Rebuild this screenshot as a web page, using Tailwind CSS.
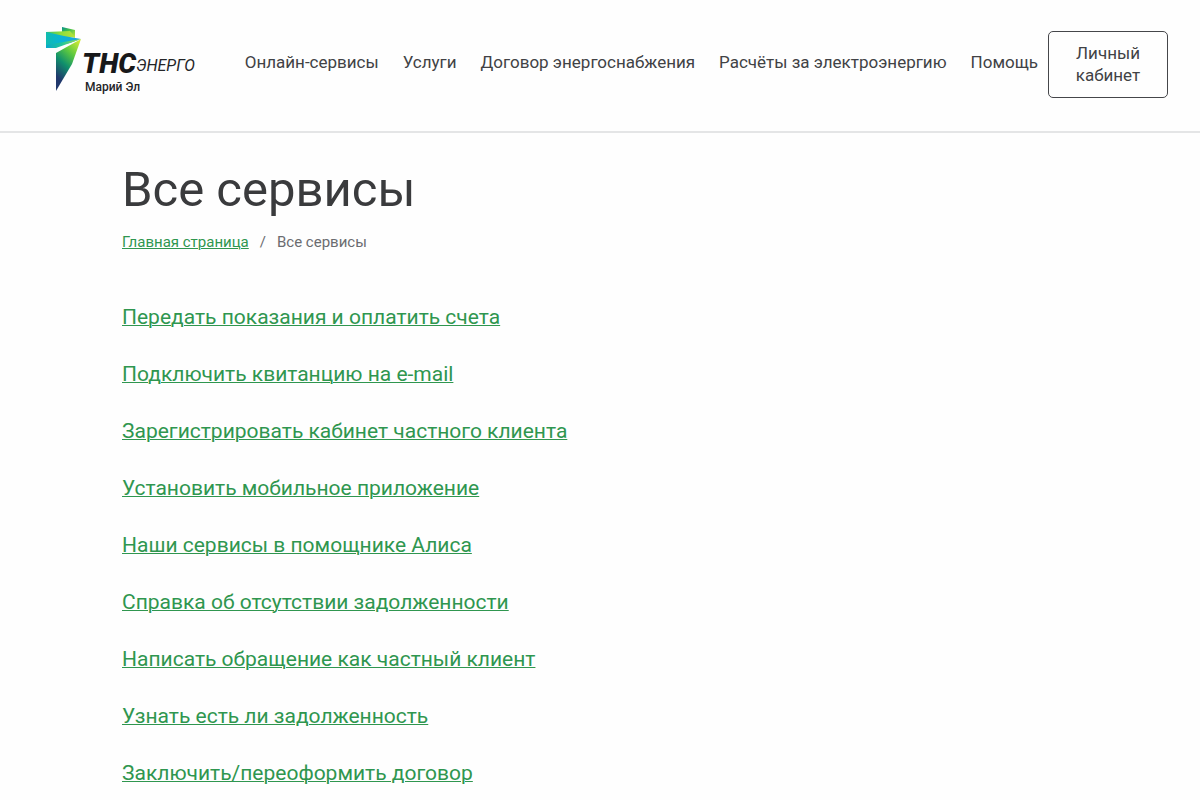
<!DOCTYPE html>
<html lang="ru">
<head>
<meta charset="utf-8">
<meta name="viewport" content="width=device-width, initial-scale=1">
<title>Все сервисы</title>
<script src="https://cdn.jsdelivr.net/npm/@tailwindcss/browser@4"></script>
</head>
<body class="bg-[#fefefe] font-['Roboto',sans-serif] text-[#414245] overflow-x-hidden">
<header class="flex items-start justify-between border-b-2 border-[#e4e5e6] pt-[26px] pb-[33px] pl-[44px] pr-[32px]">
  <a href="#" aria-label="ТНС энерго Марий Эл" class="shrink-0">
    <svg class="block" width="156" height="72" viewBox="0 0 156 72">
      <defs>
        <linearGradient id="back" x1="0" y1="0" x2="1" y2="1"><stop offset="0" stop-color="#0a8f8c"/><stop offset="0.4" stop-color="#3fbf4c"/><stop offset="1" stop-color="#d0e838"/></linearGradient>
        <linearGradient id="top" x1="0" y1="0" x2="1" y2="0"><stop offset="0" stop-color="#2cc070"/><stop offset="0.5" stop-color="#8cdc3c"/><stop offset="1" stop-color="#b4e43c"/></linearGradient>
        <linearGradient id="flag" x1="0" y1="0" x2="1" y2="0"><stop offset="0" stop-color="#10bcae"/><stop offset="0.4" stop-color="#08b4d4"/><stop offset="1" stop-color="#1ca4dc"/></linearGradient>
        <linearGradient id="band" x1="0" y1="0" x2="1" y2="0"><stop offset="0" stop-color="#08a8cc"/><stop offset="0.45" stop-color="#20c49c"/><stop offset="1" stop-color="#b8e43c"/></linearGradient>
        <linearGradient id="leg" gradientUnits="userSpaceOnUse" x1="36" y1="16" x2="8" y2="46"><stop offset="0" stop-color="#d0ea34"/><stop offset="0.35" stop-color="#5cc840"/><stop offset="0.65" stop-color="#10906c"/><stop offset="1" stop-color="#20386c"/></linearGradient>
      </defs>
      <path d="M18 1 L31 4 L31 12 L18 8 Z" fill="url(#back)"/>
      <path d="M2 6 L26 5 L31 11 L18 12 L2 12 Z" fill="url(#top)"/>
      <path d="M2 6 L20 10 L37 13 L26 17 L2 22 Z" fill="url(#flag)"/>
      <path d="M2 22 L2 19 L37 13 L12 22 Z" fill="url(#band)"/>
      <path d="M12 27 L37 13 L28 38 L12 65 Z" fill="url(#leg)"/>
      <text x="38" y="47" font-size="28" font-weight="900" font-style="italic" fill="#17181a">ТНС</text>
      <text x="92" y="45" font-size="16" font-style="italic" fill="#242528">ЭНЕРГО</text>
      <text x="41" y="65" font-size="12" font-weight="500" fill="#242528">Марий Эл</text>
    </svg>
  </a>
  <nav aria-label="Основное меню" class="mt-[5px] flex items-start text-[17px] leading-[22px]">
    <ul class="mt-5 mr-[10px] flex gap-6 whitespace-nowrap">
      <li><a href="#">Онлайн-сервисы</a></li>
      <li><a href="#">Услуги</a></li>
      <li><a href="#">Договор энергоснабжения</a></li>
      <li><a href="#">Расчёты за электроэнергию</a></li>
      <li><a href="#">Помощь</a></li>
    </ul>
    <button type="button" class="w-[120px] rounded-[5px] border border-[#45464a] px-5 pt-[10px] pb-[11px] text-center">Личный кабинет</button>
  </nav>
</header>
<main class="px-[122px] pt-[26px]">
  <h1 class="text-[49px] leading-[62px] text-[#3a3b3d]">Все сервисы</h1>
  <nav aria-label="Навигационная цепочка" class="mt-[10px] text-[15px] leading-[22px] text-[#6b6c70]">
    <ol class="flex">
      <li><a href="#" class="text-[#2f964f] underline decoration-1">Главная страница</a></li>
      <li class="before:mx-[11px] before:content-['/']">Все сервисы</li>
    </ol>
  </nav>
  <ul class="mt-[49px] flex flex-col gap-[27px] text-[21px] leading-[30px] text-[#2f964f]">
    <li><a href="#" class="underline decoration-1">Передать показания и оплатить счета</a></li>
    <li><a href="#" class="underline decoration-1">Подключить квитанцию на e-mail</a></li>
    <li><a href="#" class="underline decoration-1">Зарегистрировать кабинет частного клиента</a></li>
    <li><a href="#" class="underline decoration-1">Установить мобильное приложение</a></li>
    <li><a href="#" class="underline decoration-1">Наши сервисы в помощнике Алиса</a></li>
    <li><a href="#" class="underline decoration-1">Справка об отсутствии задолженности</a></li>
    <li><a href="#" class="underline decoration-1">Написать обращение как частный клиент</a></li>
    <li><a href="#" class="underline decoration-1">Узнать есть ли задолженность</a></li>
    <li><a href="#" class="underline decoration-1">Заключить/переоформить договор</a></li>
  </ul>
</main>
</body>
</html>
